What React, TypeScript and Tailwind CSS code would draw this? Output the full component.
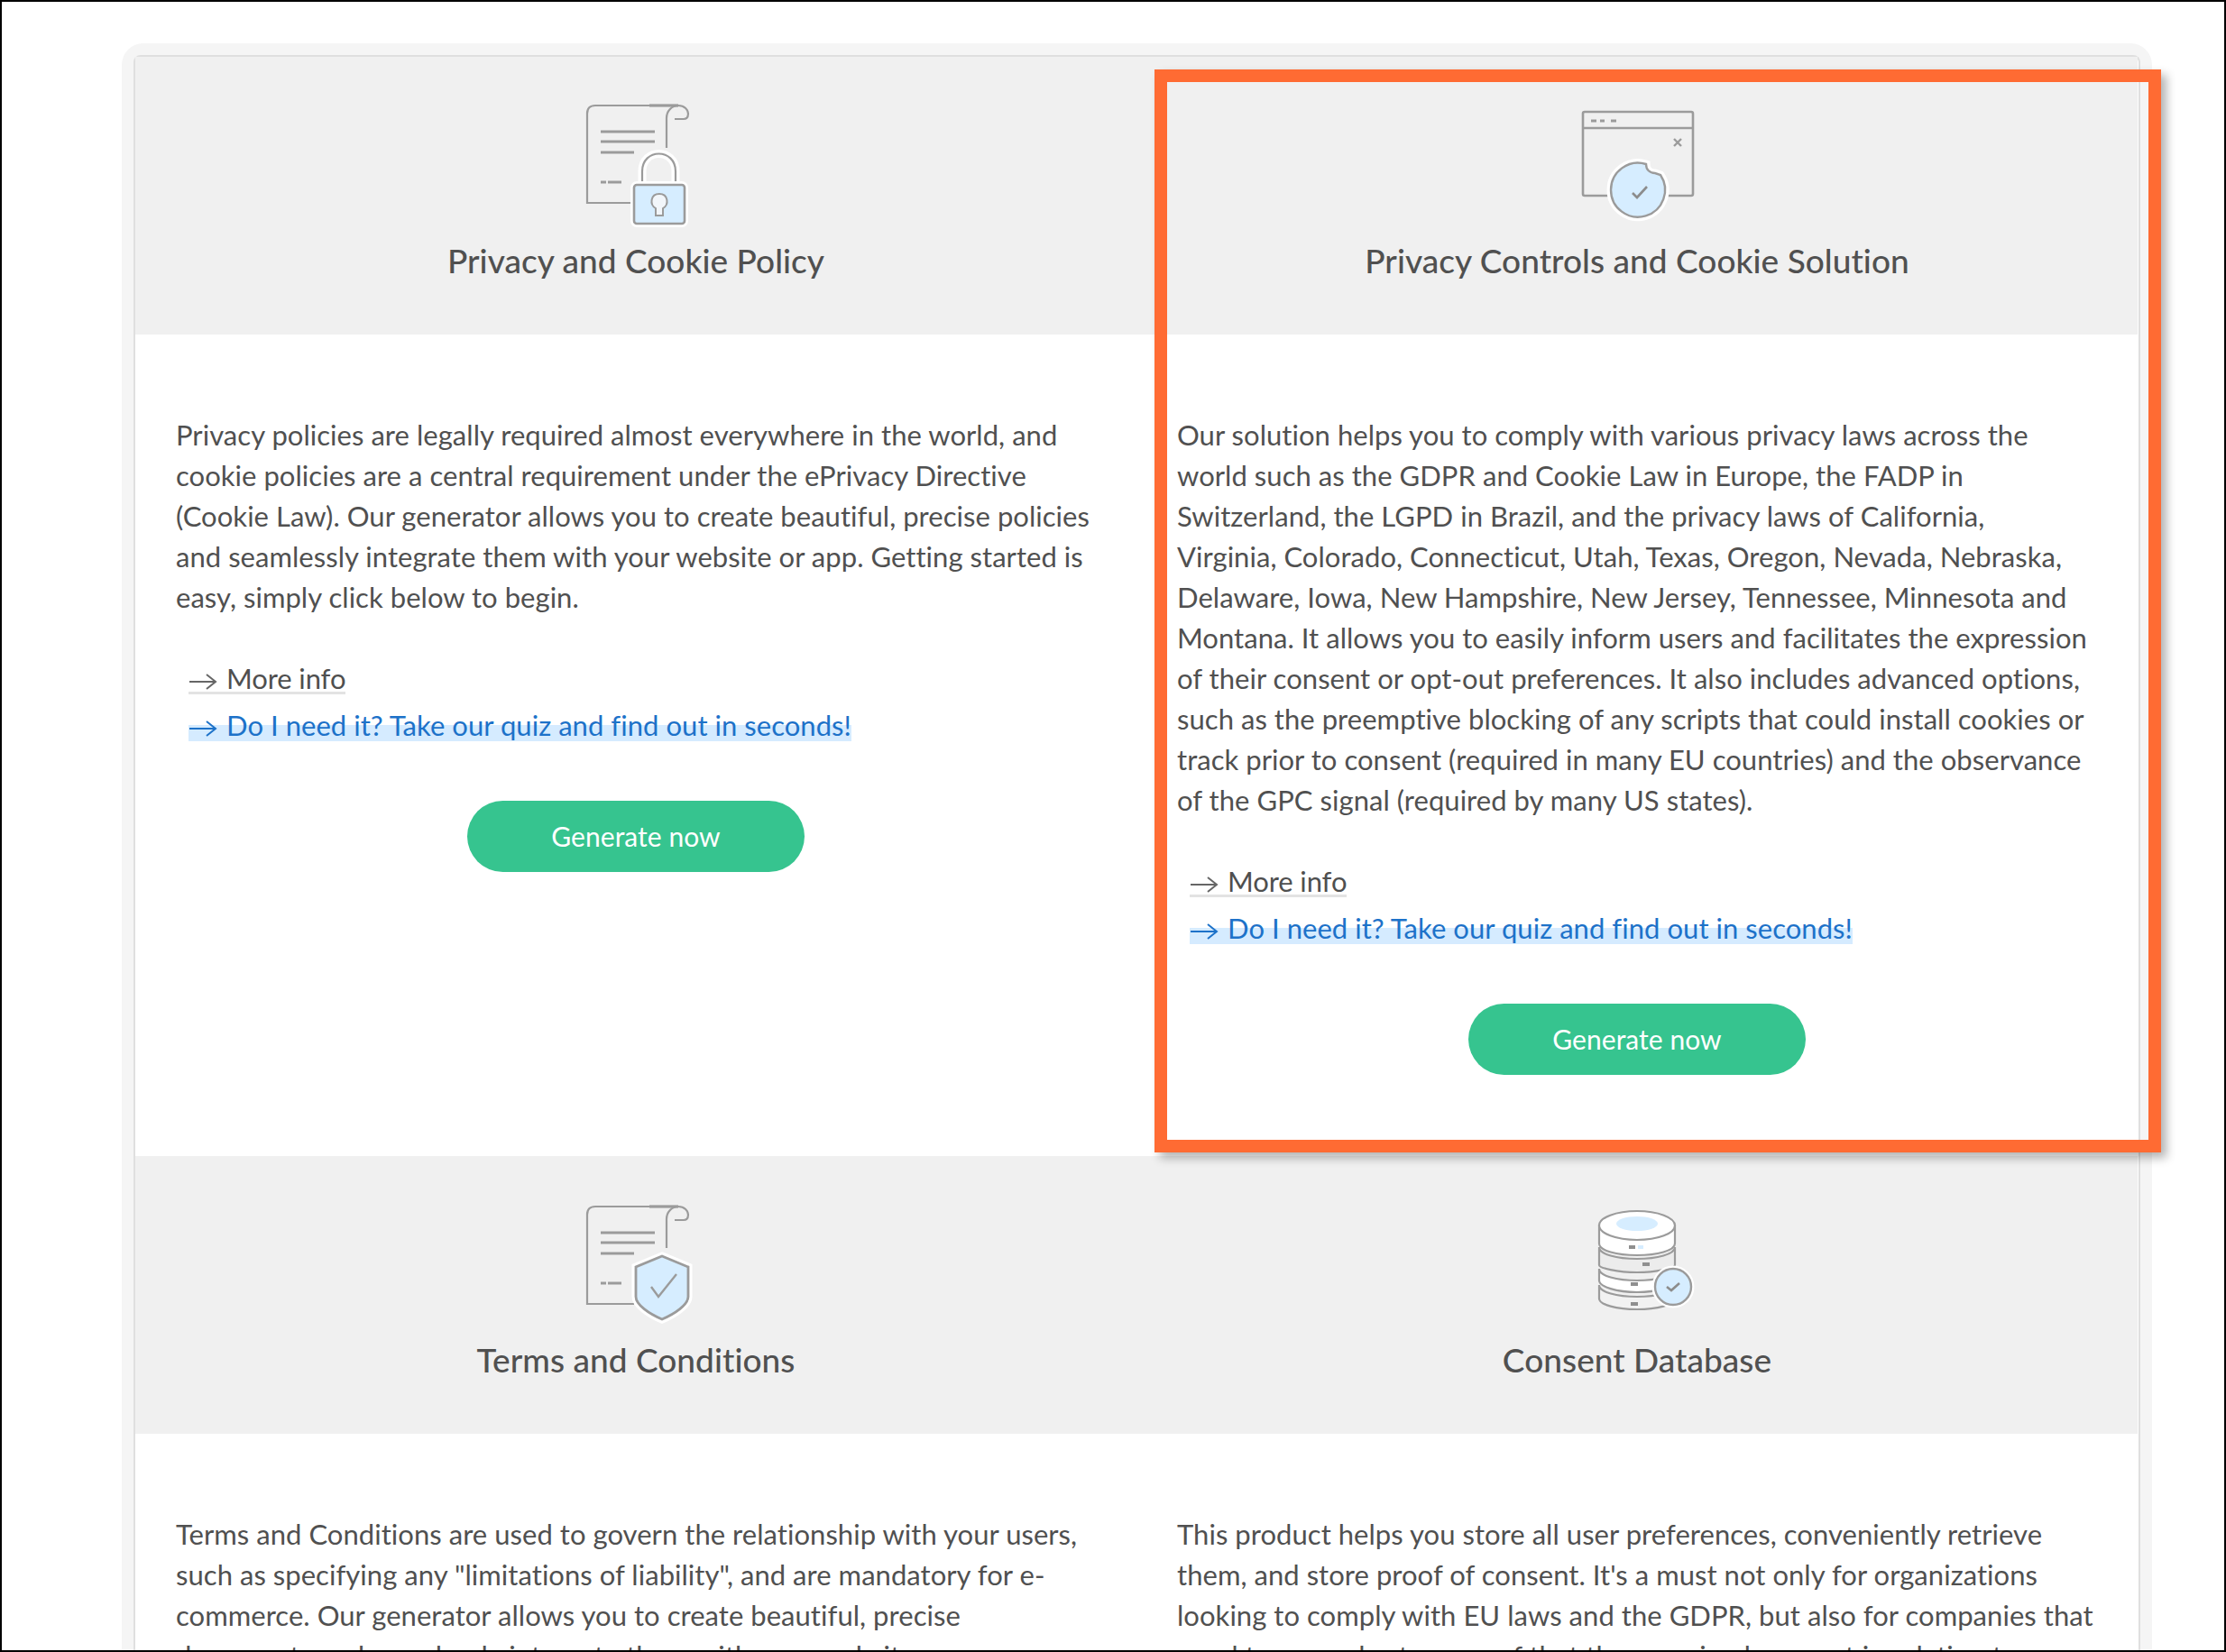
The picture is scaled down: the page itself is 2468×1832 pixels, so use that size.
import React from "react";

const FONT = "font-['Lato','Noto_Sans',sans-serif]";

function Arrow({ color }: { color: string }) {
  return (
    <svg width="32" height="20" viewBox="0 0 32 20" fill="none" stroke={color} strokeWidth="2" className="inline-block mr-[10px] align-[-2px]">
      <path d="M1 10H30" />
      <path d="M20 2L30 10L20 18" />
    </svg>
  );
}

const S = "#9b9b9b";
const B = "#d6edff";

function Scroll({ stemEnd }: { stemEnd: number }) {
  return (
    <>
      <path d="M104 3H12C6 3 3 6 3 12V111H55" fill="none" stroke={S} strokeWidth="2.2" />
      <path d="M72 3H104" stroke={S} strokeWidth="3.2" />
      <path d={`M91 ${stemEnd}V17C91 9 97 3 104 3C111 3 115 8 115 12C115 16 113 18 110 18H100`} fill="none" stroke={S} strokeWidth="2.2" />
      <path d="M18 32H78M18 43H78M18 55H55M18 88H24M26 88H41" stroke={S} strokeWidth="2.8" />
    </>
  );
}

function PolicyIcon() {
  return (
    <svg width="114" height="138" viewBox="0 0 114 138" className="overflow-visible">
      <Scroll stemEnd={50} />
      <path d="M64 91V76C64 50 101 50 101 76V91" fill="none" stroke="#fff" strokeWidth="9" />
      <path d="M64 91V76C64 50 101 50 101 76V91" fill="none" stroke={S} strokeWidth="2.2" />
      <rect x="55" y="91" width="56" height="43" rx="3" fill={B} stroke="#fff" strokeWidth="8" />
      <rect x="55" y="91" width="56" height="43" rx="3" fill={B} stroke={S} strokeWidth="2.6" />
      <path d="M79 125H87V117C94 113 93 101 83 101C73 101 72 113 79 117Z" fill="#f2f6fa" stroke={S} strokeWidth="2" />
    </svg>
  );
}

function CookieIcon() {
  const d = "M88 72A30 30 0 1 1 72 60C72 66 76 70 82 70L88 72Z";
  return (
    <svg width="124" height="126" viewBox="0 0 124 126" className="overflow-visible">
      <rect x="2" y="2" width="122" height="93" rx="2" fill="none" stroke={S} strokeWidth="2.6" />
      <path d="M2 20H124" stroke={S} strokeWidth="2.6" />
      <path d="M11 12H17M21 12H26M33 12H39" stroke={S} strokeWidth="3" />
      <path d="M103 32L111 40M111 32L103 40" stroke={S} strokeWidth="2.4" />
      <path d={d} fill={B} stroke="#fff" strokeWidth="9" />
      <path d={d} fill={B} stroke={S} strokeWidth="2.4" />
      <path d="M57 92L62 97L73 85" fill="none" stroke="#8c8c8c" strokeWidth="2.6" />
    </svg>
  );
}

function TermsIcon() {
  const d = "M86 58L115 70V103C115 112 100 122 86 128C72 122 57 112 57 103V70Z";
  return (
    <svg width="114" height="132" viewBox="0 0 114 132" className="overflow-visible">
      <Scroll stemEnd={49} />
      <path d={d} fill={B} stroke="#fff" strokeWidth="9" />
      <path d={d} fill={B} stroke={S} strokeWidth="2.8" />
      <path d="M74 92L82 103L102 78" fill="none" stroke={S} strokeWidth="2.4" />
    </svg>
  );
}

function DbIcon() {
  return (
    <svg width="88" height="114" viewBox="0 0 88 114" className="overflow-visible">
      <path d="M2 84V99C2 106 22 111 44 111C66 111 86 106 86 99V84C86 92 66 97 44 97C22 97 2 92 2 84Z" fill="#f2f2f2" stroke={S} strokeWidth="2.2" />
      <path d="M2 66V79C2 86 22 92 44 92C66 92 86 86 86 79V66C86 74 66 79 44 79C22 79 2 74 2 66Z" fill="#fff" stroke={S} strokeWidth="2.2" />
      <path d="M2 42V62C2 65 22 70 44 70C66 70 86 65 86 62V42C86 50 66 55 44 55C22 55 2 50 2 42Z" fill="#ececec" stroke={S} strokeWidth="2.2" />
      <path d="M2 18V38C2 46 22 51 44 51C66 51 86 46 86 38V18Z" fill="#fff" stroke={S} strokeWidth="2.2" />
      <ellipse cx="44" cy="18" rx="42" ry="16" fill="#fff" stroke={S} strokeWidth="2.2" />
      <ellipse cx="44" cy="16" rx="23" ry="8" fill={B} />
      <rect x="35" y="40" width="7" height="4" fill="#8f8f8f" />
      <rect x="45" y="40" width="6" height="4" fill={B} />
      <rect x="50" y="59" width="8" height="4" fill="#8f8f8f" />
      <rect x="37" y="81" width="8" height="4" fill="#8f8f8f" />
      <rect x="37" y="103" width="8" height="4" fill="#8f8f8f" />
      <circle cx="84" cy="86" r="20" fill={B} stroke="#fff" strokeWidth="7" />
      <circle cx="84" cy="86" r="20" fill={B} stroke={S} strokeWidth="2.4" />
      <path d="M77 86L82 90L91 82" fill="none" stroke="#8c8c8c" strokeWidth="2.6" />
    </svg>
  );
}

function Links() {
  return (
    <div className="flex flex-col items-start pl-[14px] pt-[49px]">
      <a className="block h-[36px] leading-[36px] border-b-[3px] border-[#e3e3e3] text-[#4f4f4f] tracking-[-0.1px]">
        <Arrow color="#666666" />More info
      </a>
      <a className="block mt-[16px] h-[36px] leading-[36px] text-[#1d72c9] bg-[linear-gradient(transparent_50%,#d5ebff_50%)]">
        <Arrow color="#1d72c9" />Do I need it? Take our quiz and find out in seconds!
      </a>
    </div>
  );
}

function GenerateBtn() {
  return (
    <div className="flex justify-center pt-[66px]">
      <div className="w-[374px] h-[79px] rounded-full bg-[#36c48f] text-white text-[30px] flex items-center justify-center">Generate now</div>
    </div>
  );
}

function Card({ icon, title, lines, links = true, iconClass }: { icon: React.ReactNode; title: string; lines: string[]; links?: boolean; iconClass: string }) {
  return (
    <div className="flex flex-col">
      <div className="h-[308px] bg-[#f0f0f0] flex flex-col items-center">
        <div className={`h-[165px] ${iconClass}`}>{icon}</div>
        <div className="mt-[39px] text-[37px] leading-[44px] font-medium text-[#505050]">{title}</div>
      </div>
      <div className="px-[45px] pt-[89px] pb-[90px]">
        <div className="leading-[45px] whitespace-nowrap">
          {lines.map((l) => (
            <div key={l}>{l}</div>
          ))}
        </div>
        {links && <Links />}
        {links && <GenerateBtn />}
      </div>
    </div>
  );
}

export default function App() {
  return (
    <div className={`${FONT} relative w-[2468px] h-[1832px] overflow-hidden bg-white border-2 border-black text-[31px] tracking-[0.04px] text-[#505050]`}>
      <div className="ml-[133px] mt-[46px] w-[2251px] h-[1800px] rounded-t-[24px] bg-[#f5f5f5] px-[13px] pt-[13px]">
        <div className="h-full rounded-t-[8px] border-t-2 border-x-2 border-[#dfdfdf] bg-white">
          <div className="grid grid-cols-2 w-[2220px]">
            <Card
              iconClass="pt-[51px]"
              icon={<PolicyIcon />}
              title="Privacy and Cookie Policy"
              lines={[
                "Privacy policies are legally required almost everywhere in the world, and",
                "cookie policies are a central requirement under the ePrivacy Directive",
                "(Cookie Law). Our generator allows you to create beautiful, precise policies",
                "and seamlessly integrate them with your website or app. Getting started is",
                "easy, simply click below to begin.",
              ]}
            />
            <Card
              iconClass="pt-[59px]"
              icon={<CookieIcon />}
              title="Privacy Controls and Cookie Solution"
              lines={[
                "Our solution helps you to comply with various privacy laws across the",
                "world such as the GDPR and Cookie Law in Europe, the FADP in",
                "Switzerland, the LGPD in Brazil, and the privacy laws of California,",
                "Virginia, Colorado, Connecticut, Utah, Texas, Oregon, Nevada, Nebraska,",
                "Delaware, Iowa, New Hampshire, New Jersey, Tennessee, Minnesota and",
                "Montana. It allows you to easily inform users and facilitates the expression",
                "of their consent or opt-out preferences. It also includes advanced options,",
                "such as the preemptive blocking of any scripts that could install cookies or",
                "track prior to consent (required in many EU countries) and the observance",
                "of the GPC signal (required by many US states).",
              ]}
            />
          </div>
          <div className="grid grid-cols-2 w-[2220px]">
            <Card
              iconClass="pt-[53px]"
              icon={<TermsIcon />}
              title="Terms and Conditions"
              links={false}
              lines={[
                "Terms and Conditions are used to govern the relationship with your users,",
                "such as specifying any \"limitations of liability\", and are mandatory for e-",
                "commerce. Our generator allows you to create beautiful, precise",
                "documents and seamlessly integrate them with your website or app.",
              ]}
            />
            <Card
              iconClass="pt-[59px]"
              icon={<DbIcon />}
              title="Consent Database"
              links={false}
              lines={[
                "This product helps you store all user preferences, conveniently retrieve",
                "them, and store proof of consent. It's a must not only for organizations",
                "looking to comply with EU laws and the GDPR, but also for companies that",
                "need to securely store proof that they received consent in relation to",
              ]}
            />
          </div>
        </div>
      </div>
      <div className="absolute left-[1278px] top-[75px] w-[1116px] h-[1201px] border-[14px] border-[#ff6b33] shadow-[6px_6px_10px_rgba(0,0,0,0.3)]" />
    </div>
  );
}
